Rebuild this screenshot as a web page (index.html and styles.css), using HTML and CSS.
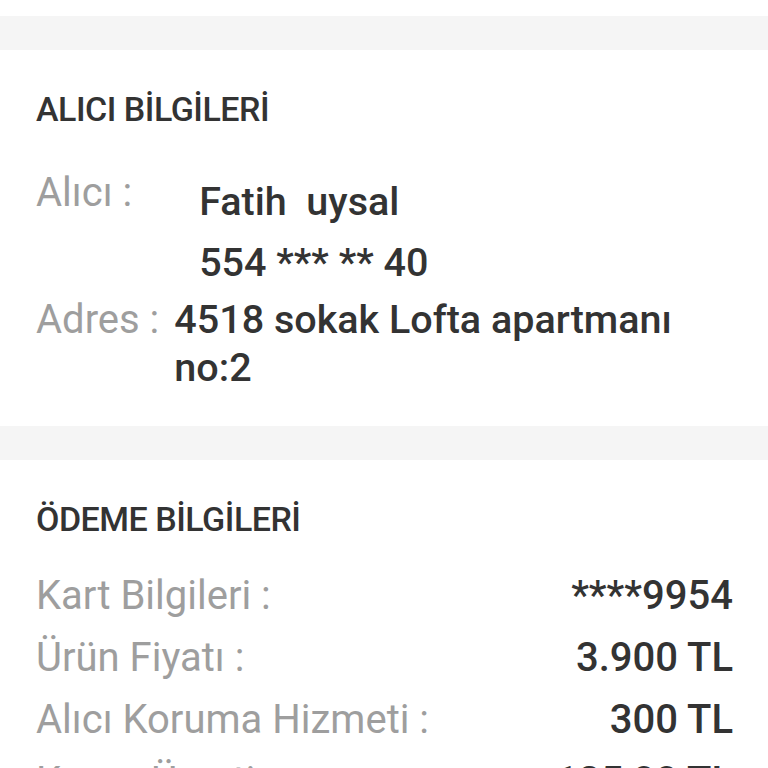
FILE: index.html
```html
<!DOCTYPE html>
<html lang="tr">
<head>
    <meta charset="UTF-8">
    <meta name="viewport" content="width=device-width, initial-scale=1.0">
    <title>Sipariş Detayı</title>
    <link rel="stylesheet" href="styles.css">
</head>
<body>
    <div class="top-space"></div>
    <div class="divider"></div>

    <div class="section">
        <h2 class="section-title">ALICI BİLGİLERİ</h2>
        <div class="info-row buyer-row">
            <span class="info-label">Alıcı :</span>
            <div class="info-value">
                <div>Fatih&nbsp; uysal</div>
                <div class="phone">554 *** ** 40</div>
            </div>
        </div>
        <div class="info-row address-row">
            <span class="info-label">Adres :</span>
            <div class="info-value">4518 sokak Lofta apartmanı no:2</div>
        </div>
    </div>

    <div class="divider"></div>

    <div class="section payment">
        <h2 class="section-title">ÖDEME BİLGİLERİ</h2>
        <div class="pay-row">
            <span class="info-label">Kart Bilgileri :</span>
            <span class="pay-value">****9954</span>
        </div>
        <div class="pay-row">
            <span class="info-label">Ürün Fiyatı :</span>
            <span class="pay-value">3.900 TL</span>
        </div>
        <div class="pay-row">
            <span class="info-label">Alıcı Koruma Hizmeti :</span>
            <span class="pay-value">300 TL</span>
        </div>
        <div class="pay-row">
            <span class="info-label">Kargo Ücreti :</span>
            <span class="pay-value">125,00 TL</span>
        </div>
    </div>
</body>
</html>
```

FILE: styles.css
```css
* {
    margin: 0;
    padding: 0;
    box-sizing: border-box;
}

body {
    font-family: Roboto, 'Liberation Sans', sans-serif;
    background-color: #fff;
    color: #333;
    width: 768px;
    overflow: hidden;
}

.top-space {
    height: 16px;
}

.divider {
    height: 34px;
    background-color: #f5f5f5;
}

.section {
    padding: 39px 35px 34px 36px;
}

.section-title {
    font-size: 34px;
    font-weight: 500;
    line-height: 40px;
    letter-spacing: -0.5px;
    color: #333;
    margin-bottom: 40px;
}

.info-row {
    display: flex;
    font-size: 40px;
    line-height: 48px;
}

.info-label {
    color: #9e9e9e;
    font-weight: 400;
    white-space: nowrap;
}

.info-value {
    font-weight: 500;
    color: #333;
    font-size: 39.5px;
}

.buyer-row .info-value {
    margin-left: 67px;
    margin-top: 9px;
}

.buyer-row .phone {
    margin-top: 13px;
}

.address-row {
    margin-top: 9px;
}

.address-row .info-value {
    margin-left: 15px;
}

.payment .section-title {
    margin-bottom: 33px;
}

.pay-row {
    display: flex;
    justify-content: space-between;
    font-size: 40px;
    line-height: 48px;
    margin-bottom: 14px;
}

.pay-value {
    font-weight: 500;
    color: #333;
}
```
